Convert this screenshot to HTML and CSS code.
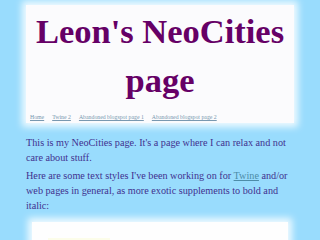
FILE: index.html
```html
<!DOCTYPE html>
<html lang="en">
<head>
    <meta charset="UTF-8">
    <title>Leon's NeoCities page</title>
    <link rel="stylesheet" href="styles.css">
</head>
<body>
    <div class="page">
        <!-- Header -->
        <div class="header">
            <h1>Leon's NeoCities page</h1>
            <div class="nav">
                <a href="#">Home</a>
                <a href="#">Twine 2</a>
                <a href="#">Abandoned blogspot page 1</a>
                <a href="#">Abandoned blogspot page 2</a>
            </div>
        </div>

        <p>This is my NeoCities page. It's a page where I can relax and not care about stuff.</p>
        <p>Here are some text styles I've been working on for <a href="#">Twine</a> and/or web pages in general, as more exotic supplements to bold and italic:</p>

        <div class="styles-box">
            <div class="sample"></div>
        </div>
    </div>
</body>
</html>
```

FILE: styles.css
```css
/* General */
body {
    margin: 0;
    background: #99dcfd;
    font-family: 'Liberation Serif', serif;
    color: #41318f;
}

.page {
    width: 268px;
    margin: 0 auto;
    padding-top: 5px;
}

/* Header */
.header {
    background: #fbfbfd;
    box-shadow: 0 0 7px 4px rgba(255, 255, 255, 0.85);
    padding: 2px 4px 0;
}

.header h1 {
    margin: 0;
    font-size: 34.5px;
    line-height: 49px;
    text-align: center;
    color: #660066;
}

.nav {
    margin-top: 7px;
    font-size: 5.8px;
    line-height: 11px;
    display: flex;
    gap: 8px;
}

.nav a {
    color: #7898b0;
}

/* Text */
p {
    margin: 12px 0 0;
    font-size: 10.2px;
    line-height: 15.3px;
}

p + p {
    margin-top: 2px;
}

p a {
    color: #4d8ca8;
}

/* Text styles box */
.styles-box {
    background: #fefefe;
    box-shadow: 0 0 7px 4px rgba(255, 255, 255, 0.85);
    margin: 9px 6px 0;
    padding: 16px;
    height: 60px;
}

.sample {
    width: 62px;
    height: 30px;
    background: #fcfde9;
}
```
